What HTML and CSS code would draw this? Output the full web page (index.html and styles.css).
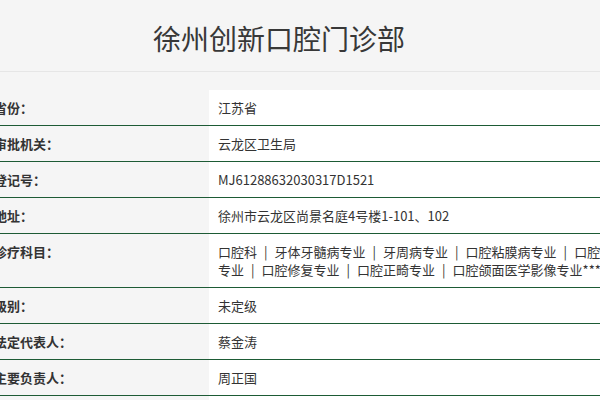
FILE: index.html
```html
<!DOCTYPE html>
<html lang="zh-CN">
<head>
<meta charset="utf-8">
<title>徐州创新口腔门诊部</title>
<link rel="stylesheet" href="styles.css">
</head>
<body>
<div class="page">
  <header class="head">
    <h1 class="title">徐州创新口腔门诊部</h1>
  </header>
  <div class="info">
    <div class="row"><div class="label">省份：</div><div class="value">江苏省</div></div>
    <div class="row"><div class="label">审批机关：</div><div class="value">云龙区卫生局</div></div>
    <div class="row"><div class="label">登记号：</div><div class="value">MJ61288632030317D1521</div></div>
    <div class="row"><div class="label">地址：</div><div class="value">徐州市云龙区尚景名庭4号楼1-101、102</div></div>
    <div class="row"><div class="label">诊疗科目：</div><div class="value">口腔科<span class="sep">|</span>牙体牙髓病专业<span class="sep">|</span>牙周病专业<span class="sep">|</span>口腔粘膜病专业<span class="sep">|</span>口腔颌面外科专业<span class="sep">|</span>口腔修复专业<span class="sep">|</span>口腔正畸专业<span class="sep">|</span>口腔颌面医学影像专业******</div></div>
    <div class="row"><div class="label">级别：</div><div class="value">未定级</div></div>
    <div class="row"><div class="label">法定代表人：</div><div class="value">蔡金涛</div></div>
    <div class="row"><div class="label">主要负责人：</div><div class="value">周正国</div></div>
    <div class="row"><div class="label">床位数：</div><div class="value">0</div></div>
  </div>
</div>
</body>
</html>
```
FILE: styles.css
```css
html, body {
  margin: 0;
  padding: 0;
  background: #f5f5f5;
  overflow: hidden;
}
body {
  font-family: "Noto Sans CJK SC", "Noto Sans", sans-serif;
  color: #333;
  font-size: 13px;
}
.page {
  width: 600px;
  height: 400px;
  overflow: hidden;
}
.head {
  height: 71px;
  border-bottom: 1px solid #e6e6e6;
  display: flex;
  align-items: center;
  padding-left: 153px;
}
.title {
  margin: 0;
  font-size: 28px;
  font-weight: normal;
  color: #383838;
  line-height: 1;
  padding-top: 4px;
}
.info {
  margin-top: 18px;
  margin-left: -20px;
  width: 685px;
}
.row {
  display: flex;
  border-bottom: 1px solid #1d5b35;
}
.label {
  width: 215px;
  flex: none;
  padding: 9px 0 8px 14px;
  line-height: 18px;
  font-weight: bold;
  color: #333;
  background: #f5f5f5;
}
.value {
  flex: 1;
  padding: 9px 9px 8px 9px;
  line-height: 18px;
  background: #fff;
  color: #333;
}
.sep {
  margin: 0 7px;
}
```
